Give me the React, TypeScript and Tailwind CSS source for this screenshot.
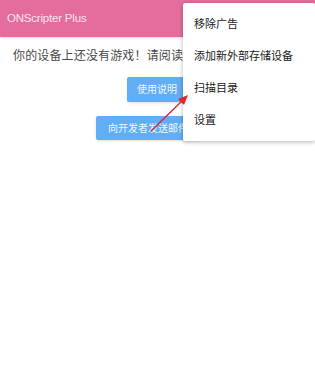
import React from "react"

const menuItems = ["移除广告", "添加新外部存储设备", "扫描目录", "设置"]

export default function App() {
  return (
    <div
      className="relative w-[315px] h-[369px] bg-white overflow-hidden"
      style={{ fontFamily: '"Liberation Sans", "Noto Sans CJK SC", sans-serif' }}
    >
      {/* 상단 바 */}
      <div className="h-[37px] bg-[#e46d9e] flex items-center pl-[7px] shadow-sm">
        <span className="text-[11.5px] text-[#fbe3ee] tracking-[-0.2px]">ONScripter Plus</span>
      </div>

      {/* 본문 */}
      <div className="flex flex-col items-start">
        <p className="mt-[11px] pl-[13px] whitespace-nowrap text-[12px] leading-[16px] tracking-[0.15px] text-[#4a4a4a]">
          你的设备上还没有游戏！请阅读使用说明。
        </p>
        <button className="mt-[13px] ml-[127px] h-[25px] px-[10px] rounded-[2px] bg-[#62aef5] text-[10px] text-[#eef6ff] shadow-sm">
          使用说明
        </button>
        <button className="mt-[14px] ml-[96px] h-[24px] px-[12px] rounded-[2px] bg-[#62aef5] text-[10px] text-[#eef6ff] shadow-sm">
          向开发者发送邮件
        </button>
      </div>

      {/* 드롭다운 메뉴 */}
      <div className="absolute left-[183px] top-[3px] w-[132px] bg-white py-[5px] rounded-[2px] shadow-[0_1px_4px_rgba(0,0,0,0.3)]">
        {menuItems.map((item) => (
          <div key={item} className="h-[32px] flex items-center pl-[11px] text-[11px] text-[#1a1a1a]">
            {item}
          </div>
        ))}
      </div>

      {/* 빨간 화살표 */}
      <svg className="absolute left-0 top-0" width="315" height="369" viewBox="0 0 315 369">
        <line x1="151" y1="131" x2="182" y2="101" stroke="#e0262a" strokeWidth="1.4" />
        <polygon points="188,95 178,99 184,105" fill="#e0262a" />
      </svg>
    </div>
  )
}
